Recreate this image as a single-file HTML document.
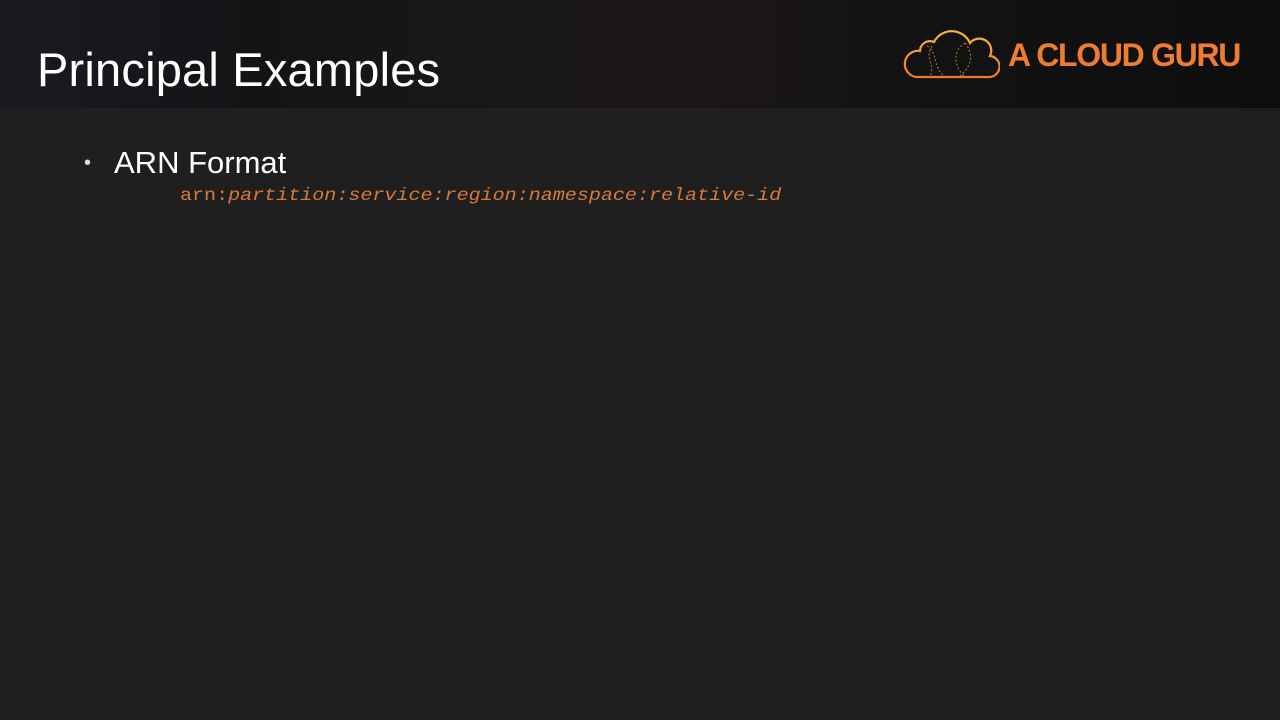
<!DOCTYPE html>
<html><head><meta charset="utf-8"><style>
body{margin:0;width:1280px;height:720px;background:#1f1f1f;overflow:hidden;font-family:"Liberation Sans",sans-serif;position:relative}
.hdr{position:absolute;left:0;top:0;width:1280px;height:108px;background:linear-gradient(90deg,#1b1a20 0%,#141316 20%,#1a1718 40%,#1c1716 55%,#131313 70%,#0e0e0e 100%)}
.title{position:absolute;left:37px;top:42px;font-size:47px;color:#fff;letter-spacing:0.2px;white-space:nowrap}
.logo{position:absolute;left:1008px;top:37px;font-size:32px;font-weight:bold;color:#ef7d30;letter-spacing:-1.3px}
.bul{position:absolute;left:84px;top:152px;color:#ddd;font-size:20px}
.arn{position:absolute;left:114px;top:145px;color:#fff;font-size:31px;letter-spacing:0px}
.code{position:absolute;left:180px;top:186px;font-family:"Liberation Mono",monospace;font-size:17.9px;color:#d9793a;white-space:nowrap;transform:scaleX(1.12);transform-origin:left}
</style></head><body>
<div class="hdr"></div>
<div class="title">Principal Examples</div>
<svg style="position:absolute;left:902px;top:26px" width="98" height="56" viewBox="0 0 98 56">
<defs><linearGradient id="g" x1="0" y1="0" x2="0" y2="1"><stop offset="0" stop-color="#f6b73c"/><stop offset="1" stop-color="#ee7a2c"/></linearGradient></defs>
<path d="M14 51 H86 A10 10 0 0 0 88 30 A12 12 0 0 0 68 17 A20 20 0 0 0 32 16 A10 10 0 0 0 18 25 A13 13 0 0 0 14 51 Z" fill="none" stroke="url(#g)" stroke-width="2.2"/>
<path d="M25 20 C36 26 30 40 42 50 M30 20 C22 32 34 40 28 50 M63 17 C50 25 52 40 62 50 M63 17 C72 28 70 40 58 50" fill="none" stroke="#b77a3a" stroke-width="1" stroke-dasharray="2 2"/>
</svg>
<div class="logo">A CLOUD GURU</div>
<div class="bul">•</div>
<div class="arn">ARN Format</div>
<div class="code">arn:<i>partition:service:region:namespace:relative-id</i></div>
</body></html>
